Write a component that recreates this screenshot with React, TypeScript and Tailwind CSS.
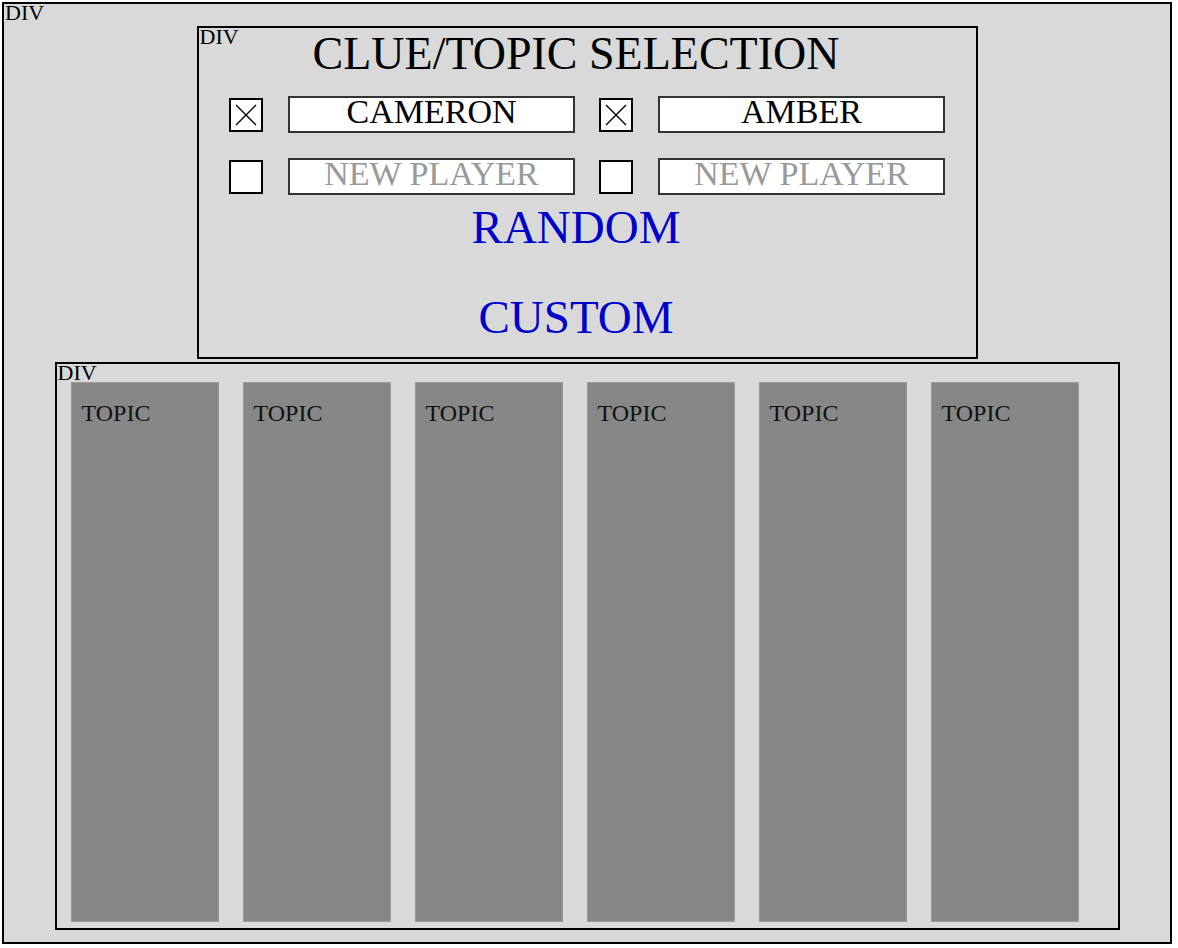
const players = [
  { name: "CAMERON", checked: true },
  { name: "AMBER", checked: true },
  { name: "NEW PLAYER", checked: false },
  { name: "NEW PLAYER", checked: false },
]

const topics = ["TOPIC", "TOPIC", "TOPIC", "TOPIC", "TOPIC", "TOPIC"]

function Checkbox({ checked }: { checked: boolean }) {
  return (
    <div className="w-[34px] h-[34px] shrink-0 border-2 border-black bg-white flex items-center justify-center">
      {checked && (
        <svg width="30" height="30" viewBox="0 0 30 30">
          <path d="M5 5 L25 25 M25 5 L5 25" stroke="#000" strokeWidth="1.4" />
        </svg>
      )}
    </div>
  )
}

function PlayerField({ name, checked }: { name: string; checked: boolean }) {
  const isNew = name === "NEW PLAYER"
  return (
    <div className="flex items-center gap-[25px]">
      <Checkbox checked={checked} />
      <div
        className={`w-[287px] h-[37px] border-2 border-[#333] bg-white flex items-center justify-center pb-[5px] text-[34px] leading-none ${
          isNew ? "text-[#999999]" : "text-black"
        }`}
      >
        {name}
      </div>
    </div>
  )
}

function Label() {
  return <span className="absolute -top-[2px] left-[1px] text-[22px] leading-none text-black">DIV</span>
}

export default function App() {
  return (
    <div className="font-['Liberation_Serif',serif] bg-white min-h-[948px]">
      <div className="relative m-[2px] w-[1170px] h-[942px] border-2 border-black bg-[#d9d9d9] flex flex-col items-center">
        <Label />

        {/* player / mode selection */}
        <div className="relative mt-[22px] w-[781px] h-[333px] border-2 border-black bg-[#d9d9d9] flex flex-col items-center pt-[3px]">
          <Label />
          <h1 className="pr-[22px] text-[46px] leading-none text-black">CLUE/TOPIC SELECTION</h1>
          <div className="mt-[19px] grid grid-cols-2 gap-x-[24px] gap-y-[25px]">
            {players.map((p, i) => (
              <PlayerField key={i} name={p.name} checked={p.checked} />
            ))}
          </div>
          <button className="mt-[9px] pr-[22px] text-[47px] leading-none text-[#0000cc]">RANDOM</button>
          <button className="mt-[43px] pr-[22px] text-[47px] leading-none text-[#0000cc]">CUSTOM</button>
        </div>

        {/* topics */}
        <div className="relative mt-[3px] w-[1065px] h-[568px] border-2 border-black bg-[#d9d9d9] flex gap-[24px] pl-[14px] pt-[18px] pb-[6px]">
          <Label />
          {topics.map((t, i) => (
            <div key={i} className="w-[148px] h-[540px] border border-[#9a9a9a] bg-[#878787] pl-[10px] pt-[18px]">
              <span className="text-[24px] leading-none text-[#111]">{t}</span>
            </div>
          ))}
        </div>
      </div>
    </div>
  )
}
